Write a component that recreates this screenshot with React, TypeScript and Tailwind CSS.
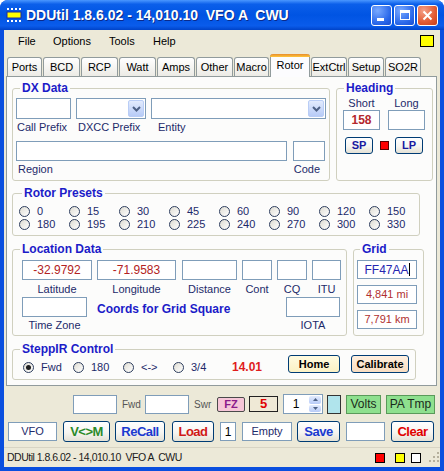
import React from "react";

const navy = "text-[#1d2a6a]";
const xpBtn = "bg-[linear-gradient(180deg,#ffffff_0%,#f6f5f1_55%,#e4e1d5_100%)]";

function Field({ className = "", children }: { className?: string; children?: React.ReactNode }) {
  return (
    <div className={`flex items-center justify-center border border-[#7f9db9] bg-white ${className}`}>
      {children}
    </div>
  );
}

function Chevron() {
  return (
    <svg width="9" height="6" viewBox="0 0 9 6">
      <path d="M1 1 L4.5 4.5 L8 1" stroke="#4d6185" strokeWidth="2" fill="none" />
    </svg>
  );
}

function Combo({ className = "" }: { className?: string }) {
  return (
    <div className={`flex justify-end border border-[#7f9db9] bg-white p-[1px] ${className}`}>
      <div className="w-[16px] h-full rounded-[2px] border border-[#b9cdf6] bg-[linear-gradient(180deg,#e2ebfd,#b7cbf7)] flex items-center justify-center">
        <Chevron />
      </div>
    </div>
  );
}

function Btn({ className = "", children }: { className?: string; children?: React.ReactNode }) {
  return (
    <div className={`flex items-center justify-center rounded-[3px] border border-[#003c74] font-bold ${className}`}>
      {children}
    </div>
  );
}

function Radio({ label, checked = false }: { label: string; checked?: boolean }) {
  return (
    <div className="flex items-center h-[13px] w-[50px]">
      <span className="w-[11px] h-[11px] shrink-0 rounded-full border border-[#2e3e5e] bg-[linear-gradient(135deg,#dedcd2,#ffffff)] flex items-center justify-center">
        {checked && <span className="w-[5px] h-[5px] rounded-full bg-[#1e1e1e]" />}
      </span>
      <span className={`ml-[7px] text-[11px] leading-[13px] ${navy}`}>{label}</span>
    </div>
  );
}

function Group({
  title,
  className = "",
  legend = "ml-[7px]",
  children,
}: {
  title: string;
  className?: string;
  legend?: string;
  children?: React.ReactNode;
}) {
  return (
    <fieldset className={`border border-[#d0d0bf] rounded-[3px] ${className}`}>
      <legend className={`${legend} px-[2px] text-[12px] leading-[14px] font-bold text-[#1b1bc8]`}>{title}</legend>
      {children}
    </fieldset>
  );
}

const tabs = [
  { t: "Ports", w: "w-[35px]" },
  { t: "BCD", w: "w-[37px]" },
  { t: "RCP", w: "w-[37px]" },
  { t: "Watt", w: "w-[37px]" },
  { t: "Amps", w: "w-[38px]" },
  { t: "Other", w: "w-[37px]" },
  { t: "Macro", w: "w-[35px]" },
  { t: "Rotor", w: "w-[40px]", on: true },
  { t: "ExtCtrl", w: "w-[36px]" },
  { t: "Setup", w: "w-[36px]" },
  { t: "SO2R", w: "w-[36px]" },
];

const presets = ["0", "15", "30", "45", "60", "90", "120", "150", "180", "195", "210", "225", "240", "270", "300", "330"];

export default function App() {
  return (
    <div className="w-[444px] h-[471px] flex flex-col bg-[#0a4fdf] rounded-t-[8px] overflow-hidden font-['Liberation_Sans',Arial,sans-serif] text-black">
      {/* title bar */}
      <div className="h-[30px] shrink-0 flex items-center bg-[linear-gradient(180deg,#4a97ff_0%,#0b5fea_14%,#0054e3_50%,#0a5ceb_86%,#0043c8_100%)]">
        <svg className="ml-[6px]" width="16" height="16" viewBox="0 0 16 16">
          <rect x="1" y="5" width="14" height="6" fill="#ffff00" stroke="#1c2c9c" strokeWidth="1" />
          <rect x="1" y="1" width="2" height="2" fill="#ffffff" />
          <rect x="5" y="1" width="2" height="2" fill="#ffffff" />
          <rect x="9" y="1" width="2" height="2" fill="#ffffff" />
          <rect x="13" y="1" width="2" height="2" fill="#ffffff" />
          <rect x="1" y="13" width="2" height="2" fill="#ffffff" />
          <rect x="5" y="13" width="2" height="2" fill="#ffffff" />
          <rect x="9" y="13" width="2" height="2" fill="#ffffff" />
          <rect x="13" y="13" width="2" height="2" fill="#ffffff" />
        </svg>
        <span className="ml-[4px] text-[14px] font-bold text-white whitespace-pre [text-shadow:1px_1px_0_#0b2a8a]">
          DDUtil 1.8.6.02 - 14,010.10  VFO A  CWU
        </span>
        <div className="ml-auto mr-[6px] flex gap-[2px]">
          <div className="w-[21px] h-[21px] rounded-[3px] border border-white bg-[radial-gradient(circle_at_30%_25%,#7aaaff,#2a68ea_65%,#1a4ed0)] flex items-end pl-[5px] pb-[4px]">
            <span className="w-[7px] h-[3px] bg-white" />
          </div>
          <div className="w-[21px] h-[21px] rounded-[3px] border border-white bg-[radial-gradient(circle_at_30%_25%,#7aaaff,#2a68ea_65%,#1a4ed0)] flex items-center justify-center">
            <span className="w-[10px] h-[10px] border border-white border-t-[3px]" />
          </div>
          <div className="w-[21px] h-[21px] rounded-[3px] border border-white bg-[radial-gradient(circle_at_30%_25%,#f4a088,#e25a32_60%,#c63f1a)] flex items-center justify-center">
            <svg width="11" height="11" viewBox="0 0 11 11">
              <path d="M1.5 1.5 L9.5 9.5 M9.5 1.5 L1.5 9.5" stroke="#ffffff" strokeWidth="2" />
            </svg>
          </div>
        </div>
      </div>

      <div className="mx-[4px] mb-[4px] flex-1 bg-[#ece9d8] flex flex-col">
        {/* menu */}
        <div className="h-[22px] flex items-center pl-[14px] text-[11px]">
          <span className="w-[35px]">File</span>
          <span className="w-[56px]">Options</span>
          <span className="w-[44px]">Tools</span>
          <span>Help</span>
          <span className="ml-auto mr-[6px] w-[14px] h-[12px] border border-black bg-[#ffff00]" />
        </div>

        {/* tabs */}
        <div className="h-[24px] flex items-end pl-[3px] gap-[1px] text-[11px]">
          {tabs.map((tab) =>
            tab.on ? (
              <div
                key={tab.t}
                className={`${tab.w} relative z-10 -mb-[1px] h-[23px] flex flex-col rounded-t-[3px] border-x border-[#919b9c] bg-[#fcfcfe]`}
              >
                <div className="h-[3px] rounded-t-[3px] -mx-[1px] bg-[linear-gradient(180deg,#e68b2c,#ffc73c)]" />
                <div className="flex-1 flex items-center justify-center pb-[4px]">{tab.t}</div>
              </div>
            ) : (
              <div
                key={tab.t}
                className={`${tab.w} h-[19px] flex items-center justify-center rounded-t-[3px] border border-b-0 border-[#919b9c] bg-[linear-gradient(180deg,#ffffff,#ecebe5)]`}
              >
                {tab.t}
              </div>
            )
          )}
        </div>

        {/* tab page */}
        <div className="ml-[2px] w-[431px] h-[310px] border border-[#919b9c] bg-[#fcfcfb] flex flex-col pl-[5px] pt-[4px]">
          <div className="flex gap-[6px]">
            <Group title="DX Data" className="w-[318px] h-[100px]">
              <div className="mt-[3px] ml-[3px] flex gap-[5px]">
                <Field className="w-[55px] h-[21px]" />
                <Combo className="w-[70px] h-[21px]" />
                <Combo className="w-[175px] h-[21px]" />
              </div>
              <div className={`mt-[1px] ml-[3px] flex text-[11px] leading-[14px] ${navy}`}>
                <span className="w-[60px] pl-[1px]">Call Prefix</span>
                <span className="w-[75px] pl-[2px]">DXCC Prefix</span>
                <span className="pl-[7px]">Entity</span>
              </div>
              <div className="mt-[7px] ml-[3px] flex gap-[6px]">
                <Field className="w-[271px] h-[20px]" />
                <Field className="w-[32px] h-[20px]" />
              </div>
              <div className={`mt-[1px] ml-[3px] flex text-[11px] leading-[14px] ${navy}`}>
                <span className="w-[277px] pl-[2px]">Region</span>
                <span className="w-[32px] text-right pr-[5px]">Code</span>
              </div>
            </Group>

            <Group title="Heading" className="w-[97px] h-[100px]">
              <div className={`mt-[1px] pl-[6px] flex gap-[8px] text-[11px] leading-[14px] ${navy}`}>
                <span className="w-[37px] text-center">Short</span>
                <span className="w-[37px] text-center">Long</span>
              </div>
              <div className="pl-[6px] flex gap-[8px]">
                <Field className="w-[37px] h-[20px] text-[12px] font-bold text-[#b3282d]">158</Field>
                <Field className="w-[37px] h-[20px]" />
              </div>
              <div className="mt-[7px] pl-[8px] flex items-center">
                <Btn className={`w-[28px] h-[17px] text-[11px] text-[#1a1aa0] ${xpBtn}`}>SP</Btn>
                <span className="ml-[7px] w-[9px] h-[9px] bg-[#ff0000] border border-[#5a0000]" />
                <Btn className={`ml-[6px] w-[28px] h-[17px] text-[11px] text-[#1a1aa0] ${xpBtn}`}>LP</Btn>
              </div>
            </Group>
          </div>

          <Group title="Rotor Presets" legend="ml-[9px]" className="mt-[5px] w-[400px] h-[50px]">
            <div className="mt-[5px] pl-[6px] grid grid-cols-[repeat(8,50px)]">
              {presets.map((p) => (
                <Radio key={p} label={p} />
              ))}
            </div>
          </Group>

          <div className="mt-[6px] flex gap-[6px]">
            <Group title="Location Data" className="w-[335px] h-[94px]">
              <div className="mt-[4px] pl-[9px] flex text-[12px] text-[#b22222]">
                <Field className="w-[70px] h-[20px]">-32.9792</Field>
                <Field className="ml-[5px] w-[79px] h-[20px]">-71.9583</Field>
                <Field className="ml-[6px] w-[55px] h-[20px]" />
                <Field className="ml-[5px] w-[30px] h-[20px]" />
                <Field className="ml-[5px] w-[30px] h-[20px]" />
                <Field className="ml-[5px] w-[29px] h-[20px]" />
              </div>
              <div className={`mt-[2px] pl-[9px] flex text-[11px] leading-[14px] ${navy}`}>
                <span className="w-[70px] text-center">Latitude</span>
                <span className="ml-[5px] w-[79px] text-center">Longitude</span>
                <span className="ml-[6px] w-[55px] text-center">Distance</span>
                <span className="ml-[5px] w-[30px] text-center">Cont</span>
                <span className="ml-[5px] w-[30px] text-center">CQ</span>
                <span className="ml-[5px] w-[29px] text-center">ITU</span>
              </div>
              <div className="mt-[1px] pl-[9px] flex items-center">
                <Field className="w-[65px] h-[20px]" />
                <span className="ml-[10px] mt-[3px] text-[12px] leading-[14px] font-bold text-[#1b1bc8]">
                  Coords for Grid Square
                </span>
                <Field className="ml-auto mr-[6px] w-[54px] h-[20px]" />
              </div>
              <div className={`mt-[1px] pl-[9px] flex text-[11px] leading-[14px] ${navy}`}>
                <span className="w-[65px] text-center">Time Zone</span>
                <span className="ml-auto mr-[6px] w-[54px] text-center">IOTA</span>
              </div>
            </Group>

            <Group title="Grid" legend="ml-[6px]" className="w-[71px] h-[94px]">
              <div className="pl-[3px] flex flex-col">
                <Field className="mt-[4px] w-[60px] h-[19px] text-[12px] text-[#2626b0]">
                  <span>FF47AA</span>
                  <span className="w-[1px] h-[13px] bg-black" />
                </Field>
                <Field className="mt-[6px] w-[60px] h-[19px] text-[11px] text-[#b03030]">4,841 mi</Field>
                <Field className="mt-[6px] w-[60px] h-[19px] text-[11px] text-[#b03030]">7,791 km</Field>
              </div>
            </Group>
          </div>

          <Group title="SteppIR Control" className="mt-[6px] w-[404px] h-[38px]">
            <div className="-mt-[1px] pl-[10px] flex items-start h-[18px]">
              <div className="mt-[6px] flex">
                <Radio label="Fwd" checked />
                <Radio label="180" />
                <Radio label="<->" />
                <Radio label="3/4" />
              </div>
              <span className="ml-[9px] mt-[5px] w-[56px] text-[12px] leading-[14px] font-bold text-[#e01d1d]">14.01</span>
              <Btn className="w-[52px] h-[18px] text-[11px] bg-[linear-gradient(180deg,#fffbe0,#fbf1c4)]">Home</Btn>
              <Btn className="ml-[11px] w-[58px] h-[18px] text-[11px] bg-[linear-gradient(180deg,#fff0e0,#f8dcc0)]">
                Calibrate
              </Btn>
            </div>
          </Group>
        </div>

        {/* bottom controls */}
        <div className="mt-[8px] h-[20px] flex items-center pl-[69px]">
          <Field className="w-[44px] h-[19px]" />
          <span className="w-[28px] pl-[5px] text-[10px] text-[#555555]">Fwd</span>
          <Field className="w-[44px] h-[19px]" />
          <span className="w-[28px] pl-[5px] text-[10px] text-[#555555]">Swr</span>
          <div className="w-[28px] h-[15px] rounded-[2px] border border-[#4a4a4a] bg-[#f6c6d8] flex items-center justify-center text-[11px] font-bold text-[#8b1a8b]">
            FZ
          </div>
          <div className="ml-[4px] w-[29px] h-[16px] border border-[#222222] bg-[#efe9d6] flex items-center justify-center text-[13px] font-bold text-[#e00000]">
            5
          </div>
          <div className="ml-[5px] w-[40px] h-[20px] border border-[#7f9db9] bg-white flex items-center">
            <span className="flex-1 text-center text-[12px]">1</span>
            <div className="w-[14px] h-full flex flex-col gap-[1px] p-[1px]">
              <div className="flex-1 rounded-[2px] bg-[linear-gradient(180deg,#e2ebfd,#b7cbf7)] flex items-center justify-center">
                <svg width="5" height="3" viewBox="0 0 5 3">
                  <path d="M0 3 L2.5 0 L5 3 Z" fill="#4d6185" />
                </svg>
              </div>
              <div className="flex-1 rounded-[2px] bg-[linear-gradient(180deg,#e2ebfd,#b7cbf7)] flex items-center justify-center">
                <svg width="5" height="3" viewBox="0 0 5 3">
                  <path d="M0 0 L2.5 3 L5 0 Z" fill="#4d6185" />
                </svg>
              </div>
            </div>
          </div>
          <span className="ml-[4px] w-[14px] h-[19px] border border-[#333333] bg-[#b0e4ec]" />
          <div className="ml-[5px] w-[35px] h-[19px] border border-[#5a9a5a] bg-[#8ee08e] flex items-center justify-center text-[12px] text-[#1a2a1a]">
            Volts
          </div>
          <div className="ml-[5px] w-[49px] h-[19px] border border-[#5a9a5a] bg-[#8ee08e] flex items-center justify-center text-[12px] text-[#1a2a1a]">
            PA Tmp
          </div>
        </div>

        <div className="mt-[7px] h-[21px] flex items-center pl-[4px]">
          <Field className={`w-[49px] h-[19px] text-[11px] ${navy}`}>VFO</Field>
          <Btn className={`ml-[6px] w-[47px] h-[21px] text-[13px] tracking-[-0.5px] text-[#2a8a2a] ${xpBtn}`}>V&lt;&gt;M</Btn>
          <Btn className={`ml-[5px] w-[50px] h-[21px] text-[13px] tracking-[-0.5px] text-[#1a3ad0] ${xpBtn}`}>ReCall</Btn>
          <Btn className={`ml-[7px] w-[42px] h-[21px] text-[13px] tracking-[-0.5px] text-[#d01818] ${xpBtn}`}>Load</Btn>
          <Field className="ml-[6px] w-[16px] h-[19px] text-[12px]">1</Field>
          <Field className={`ml-[6px] w-[50px] h-[19px] text-[11px] ${navy}`}>Empty</Field>
          <Btn className={`ml-[5px] w-[43px] h-[21px] text-[13px] tracking-[-0.5px] text-[#1a3ad0] ${xpBtn}`}>Save</Btn>
          <Field className="ml-[6px] w-[39px] h-[19px]" />
          <Btn className={`ml-[6px] w-[43px] h-[21px] text-[13px] tracking-[-0.5px] text-[#e00000] ${xpBtn}`}>Clear</Btn>
        </div>

        {/* status bar */}
        <div className="mt-auto h-[20px] flex items-center pl-[3px] border-t border-[#d8d4c4] text-[10.5px] tracking-[-0.5px] text-[#202020]">
          <span className="whitespace-pre">DDUtil 1.8.6.02 - 14,010.10  VFO A  CWU</span>
          <div className="ml-auto flex items-center">
            <span className="w-[10px] h-[10px] border border-black bg-[#ff0000]" />
            <span className="ml-[10px] w-[10px] h-[10px] border border-black bg-[#ffff00]" />
            <span className="ml-[6px] w-[10px] h-[10px] border border-black bg-white" />
            <svg className="ml-[7px] self-end mb-[1px]" width="12" height="12" viewBox="0 0 12 12">
              <g fill="#b6b19d">
                <rect x="9" y="1" width="2" height="2" />
                <rect x="5" y="5" width="2" height="2" />
                <rect x="9" y="5" width="2" height="2" />
                <rect x="1" y="9" width="2" height="2" />
                <rect x="5" y="9" width="2" height="2" />
                <rect x="9" y="9" width="2" height="2" />
              </g>
            </svg>
          </div>
        </div>
      </div>
    </div>
  );
}
